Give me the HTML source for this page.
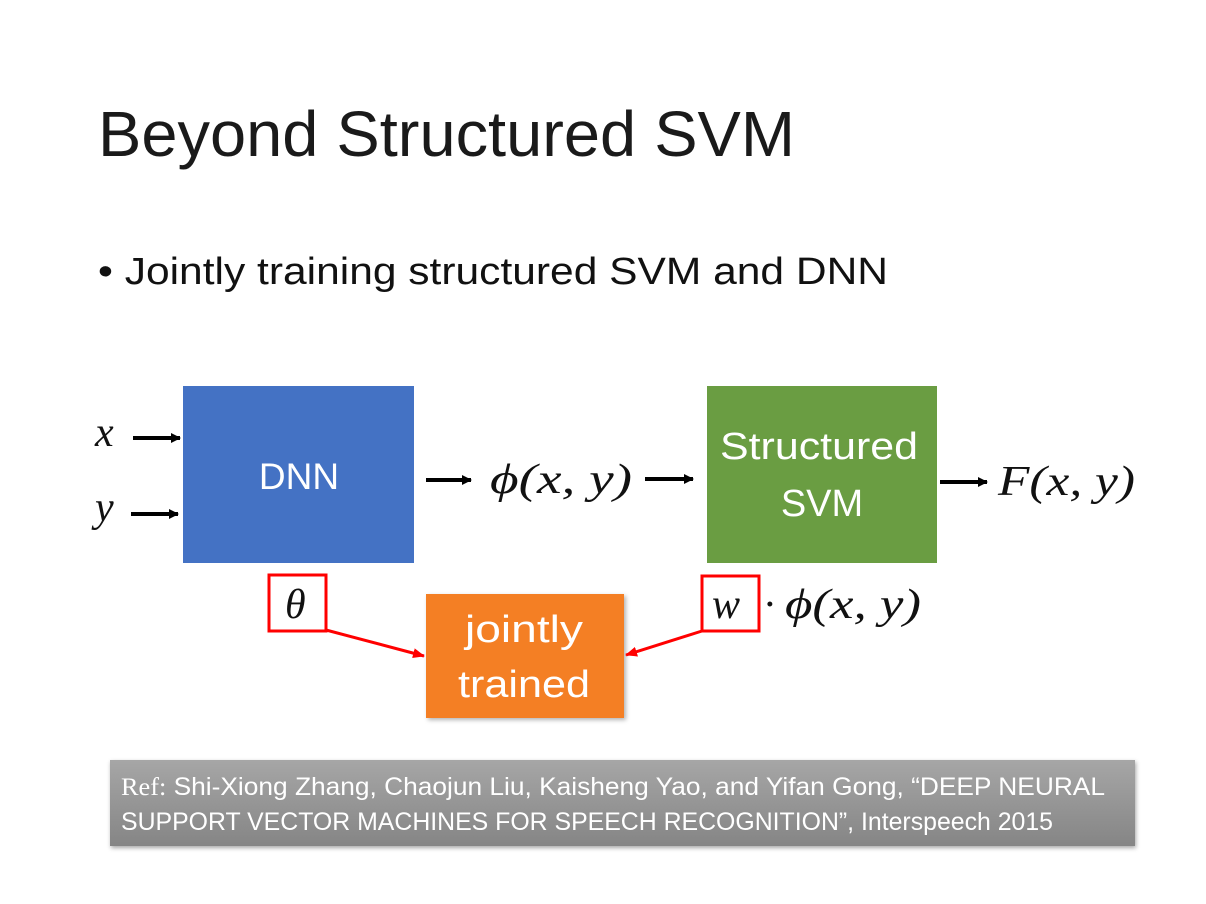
<!DOCTYPE html>
<html><head><meta charset="utf-8"><style>
html,body{margin:0;padding:0;background:#fff;}
body{width:1206px;height:904px;position:relative;overflow:hidden;font-family:"Liberation Sans",sans-serif;}
svg{position:absolute;left:0;top:0;}
</style></head><body>
<svg width="1206" height="904" viewBox="0 0 1206 904">
<defs>
<linearGradient id="g" x1="0" y1="0" x2="0" y2="1"><stop offset="0" stop-color="#a6a6a6"/><stop offset="1" stop-color="#858585"/></linearGradient>
<marker id="ab" markerWidth="10" markerHeight="10" refX="9" refY="5" orient="auto" markerUnits="userSpaceOnUse"><path d="M0,0 L10,5 L0,10z" fill="#000"/></marker>
<marker id="ar" markerWidth="12" markerHeight="10" refX="11" refY="5" orient="auto" markerUnits="userSpaceOnUse"><path d="M0,0 L12,5 L0,10z" fill="#f00"/></marker>
</defs>
<text x="98" y="156" font-size="64" fill="#1a1a1a" textLength="697" lengthAdjust="spacingAndGlyphs">Beyond Structured SVM</text>
<text x="98" y="284" font-size="38" fill="#111" textLength="790" lengthAdjust="spacingAndGlyphs">• Jointly training structured SVM and DNN</text>

<rect x="183" y="386" width="231" height="177" fill="#4472c4"/>
<text x="299" y="489" font-size="37" fill="#fff" text-anchor="middle">DNN</text>
<rect x="707" y="386" width="230" height="177" fill="#6a9d42"/>
<text x="720" y="459" font-size="38" fill="#fff" textLength="198" lengthAdjust="spacingAndGlyphs">Structured</text>
<text x="822" y="516" font-size="38" fill="#fff" text-anchor="middle">SVM</text>
<rect x="426" y="594" width="198" height="124" fill="#f47f24" style="filter:drop-shadow(2px 2px 2px rgba(0,0,0,.3))"/>
<text x="465" y="642" font-size="38" fill="#fff" textLength="118" lengthAdjust="spacingAndGlyphs">jointly</text>
<text x="458" y="697" font-size="38" fill="#fff" textLength="132" lengthAdjust="spacingAndGlyphs">trained</text>

<g font-family="Liberation Serif,serif" font-style="italic" font-size="42" fill="#111">
<text x="95" y="446">x</text>
<text x="95" y="521">y</text>
<text x="490" y="493" textLength="142" lengthAdjust="spacingAndGlyphs">ϕ(x, y)</text>
<text x="998" y="495" textLength="137" lengthAdjust="spacingAndGlyphs">F(x, y)</text>
<text x="285" y="618">θ</text>
<text x="712" y="618">w</text>
<text x="764" y="618">·</text>
<text x="785" y="618" textLength="136" lengthAdjust="spacingAndGlyphs">ϕ(x, y)</text>
</g>
<g stroke="#000" stroke-width="4">
<line x1="133" y1="438" x2="180" y2="438" marker-end="url(#ab)"/>
<line x1="131" y1="514" x2="178" y2="514" marker-end="url(#ab)"/>
<line x1="426" y1="480" x2="471" y2="480" marker-end="url(#ab)"/>
<line x1="645" y1="479" x2="693" y2="479" marker-end="url(#ab)"/>
<line x1="940" y1="482" x2="987" y2="482" marker-end="url(#ab)"/>
</g>
<rect x="269" y="575" width="57" height="56" fill="none" stroke="#f00" stroke-width="3"/>
<rect x="702" y="576" width="57" height="55" fill="none" stroke="#f00" stroke-width="3"/>
<line x1="326" y1="630" x2="424" y2="656" stroke="#f00" stroke-width="3" marker-end="url(#ar)"/>
<line x1="702" y1="631" x2="626" y2="655" stroke="#f00" stroke-width="3" marker-end="url(#ar)"/>

<rect x="110" y="760" width="1025" height="86" fill="url(#g)" style="filter:drop-shadow(1px 2px 2px rgba(0,0,0,.35))"/>
<text x="121" y="795" font-size="25" fill="#fff" textLength="984" lengthAdjust="spacingAndGlyphs"><tspan font-family="Liberation Serif,serif">Ref:</tspan> Shi-Xiong Zhang, Chaojun Liu, Kaisheng Yao, and Yifan Gong, “DEEP NEURAL</text>
<text x="121" y="830" font-size="25" fill="#fff" textLength="932" lengthAdjust="spacingAndGlyphs">SUPPORT VECTOR MACHINES FOR SPEECH RECOGNITION”, Interspeech 2015</text>
</svg>
</body></html>
